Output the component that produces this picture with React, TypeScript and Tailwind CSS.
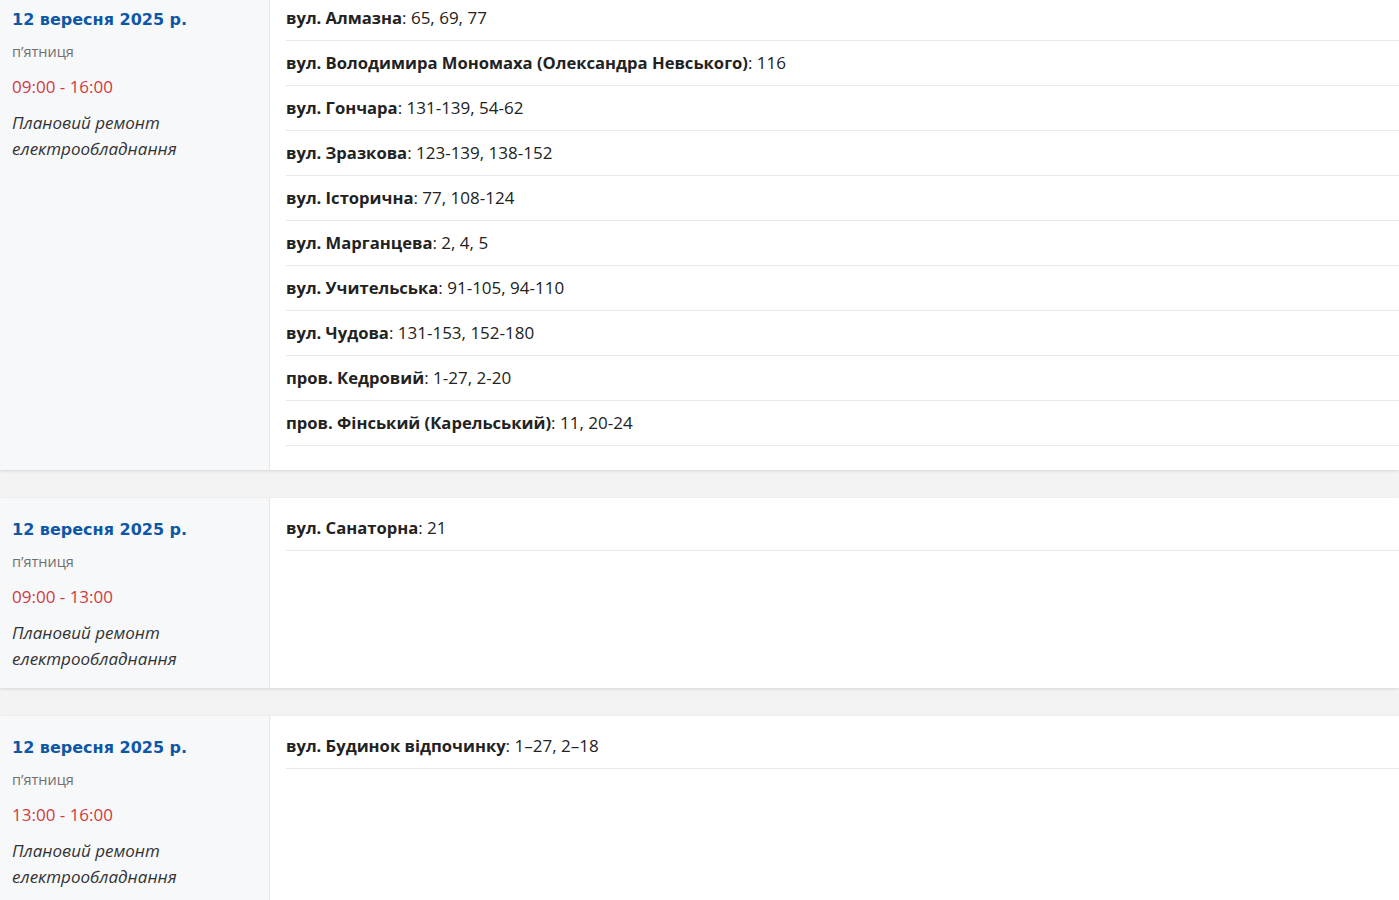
type Outage = {
  date: string;
  day: string;
  time: string;
  reason: string;
  streets: { name: string; houses: string }[];
};

const outages: Outage[] = [
  {
    date: "12 вересня 2025 р.",
    day: "п’ятниця",
    time: "09:00 - 16:00",
    reason: "Плановий ремонт електрообладнання",
    streets: [
      { name: "вул. Алмазна", houses: "65, 69, 77" },
      { name: "вул. Володимира Мономаха (Олександра Невського)", houses: "116" },
      { name: "вул. Гончара", houses: "131-139, 54-62" },
      { name: "вул. Зразкова", houses: "123-139, 138-152" },
      { name: "вул. Історична", houses: "77, 108-124" },
      { name: "вул. Марганцева", houses: "2, 4, 5" },
      { name: "вул. Учительська", houses: "91-105, 94-110" },
      { name: "вул. Чудова", houses: "131-153, 152-180" },
      { name: "пров. Кедровий", houses: "1-27, 2-20" },
      { name: "пров. Фінський (Карельський)", houses: "11, 20-24" },
    ],
  },
  {
    date: "12 вересня 2025 р.",
    day: "п’ятниця",
    time: "09:00 - 13:00",
    reason: "Плановий ремонт електрообладнання",
    streets: [{ name: "вул. Санаторна", houses: "21" }],
  },
  {
    date: "12 вересня 2025 р.",
    day: "п’ятниця",
    time: "13:00 - 16:00",
    reason: "Плановий ремонт електрообладнання",
    streets: [{ name: "вул. Будинок відпочинку", houses: "1–27, 2–18" }],
  },
];

function OutageCard({ item }: { item: Outage }) {
  return (
    <div className="flex bg-white shadow-[0_1px_3px_rgba(0,0,0,0.12)]">
      <div className="w-[270px] shrink-0 border-r border-[#e4e6ea] bg-[#f7f8fa] px-3 pt-5 pb-4">
        <div className="font-['DejaVu_Sans',sans-serif] text-[16px] leading-6 font-bold text-[#0e57a6]">
          {item.date}
        </div>
        <div className="mt-2.5 text-[14.5px] leading-5 text-[#6f6f6f]">{item.day}</div>
        <div className="mt-[13px] text-[17px] leading-6 text-[#d23a40]">{item.time}</div>
        <div className="mt-[11px] w-[200px] text-[17px] leading-[26px] text-[#333] italic">
          {item.reason}
        </div>
      </div>
      <div className="flex-1 pt-2 pb-6 pl-4">
        <ul>
          {item.streets.map((s) => (
            <li
              key={s.name}
              className="border-b border-[#e9e9e9] py-3 text-[17px] leading-5 text-[#222]"
            >
              <span className="text-[16.6px] font-bold">{s.name}</span>
              <span>: {s.houses}</span>
            </li>
          ))}
        </ul>
      </div>
    </div>
  );
}

export default function App() {
  return (
    <div className="min-h-screen bg-[#f3f3f3] font-['Open_Sans',sans-serif]">
      <div className="-mt-3 flex flex-col gap-7">
        {outages.map((o, i) => (
          <OutageCard key={i} item={o} />
        ))}
      </div>
    </div>
  );
}
